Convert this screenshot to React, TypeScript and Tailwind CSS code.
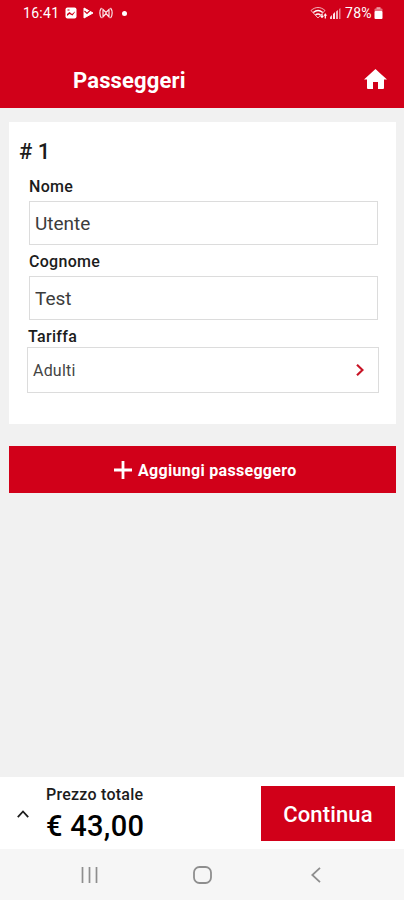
import { useState } from "react";

interface FieldProps {
  label: string;
  value: string;
  onChange: (value: string) => void;
}

// ─── Status Bar ─────────────────────────────────────────────────────────────────

function StatusBar() {
  return (
    <div className="flex h-[26px] items-center pl-[23px] pr-[20px] text-white">
      <span className="w-[37px] whitespace-nowrap text-[14px] leading-none tracking-[0.3px]">16:41</span>
      <svg className="ml-[5px]" width="12" height="12" viewBox="0 0 12 12" fill="none">
        <rect x="0.5" y="0.5" width="11" height="11" rx="2" fill="#fff" />
        <path d="M2 9V7l2.500-2 2.500 2L10 4.500V5L7.500 8.500 4.500 7z" fill="#D10019" />
        <path d="M2.500 3h2" stroke="#D10019" />
      </svg>
      <svg className="ml-[6px]" width="11" height="12" viewBox="0 0 11 12" fill="none">
        <path d="M1 1 10 6 1 11z" fill="#fff" stroke="#fff" strokeLinejoin="round" />
        <path d="m1.500 4 2.500 2.500 3-3" stroke="#D10019" strokeWidth="1.2" />
      </svg>
      <svg className="ml-[5px]" width="14" height="12" viewBox="0 0 14 12" fill="none" stroke="#fff" strokeWidth="1.2" opacity="0.9">
        <path d="M2.500 1C.3 3.500.3 8.500 2.500 11M11.500 1c2.200 2.500 2.200 7.500 0 10" />
        <path d="M4 10V2.500l3 3 3-3V10L7 6.500z" />
      </svg>
      <span className="ml-[9px] h-[5px] w-[5px] rounded-full bg-white" />

      <div className="ml-auto flex items-center">
        <svg width="18" height="14" viewBox="0 0 18 14" fill="none" stroke="#fff" strokeWidth="1.4">
          <path d="M1 4.500c4.500-4 9.500-4 14 0L8 12z" strokeWidth="1" opacity="0.7" />
          <path d="M3.300 6.500c3-2.500 6.500-2.500 9.400 0M5.500 9c1.700-1.400 3.300-1.400 5 0" />
          <path d="m10.500 10 1.500 2 1.500-2zM14 9.500l1.300-2 1.300 2z" fill="#fff" strokeWidth="0.5" />
          <path d="M12 10V8M15.300 9v3.500" strokeWidth="1.200" />
        </svg>
        <svg className="ml-[2px]" width="11" height="11" viewBox="0 0 11 11" fill="#fff">
          <path d="M0 11V9l2-2v4z" opacity="0.8" />
          <path d="M3 11V6l2-2v7z" opacity="0.9" />
          <path d="M6 11V3.500L8 2v9z" opacity="0.7" />
          <path d="M9 11V1l1.500-1v11z" opacity="0.5" />
        </svg>
        <span className="ml-[4px] w-[28px] whitespace-nowrap text-[14px] leading-none tracking-[0.3px]">78%</span>
        <svg className="ml-[1px] mr-[1px]" width="9" height="12" viewBox="0 0 9 12" fill="#fff">
          <rect x="2.500" y="0" width="4" height="2" opacity="0.5" />
          <rect x="0.500" y="1.500" width="8" height="3" rx="1" opacity="0.45" />
          <rect x="0.500" y="4" width="8" height="8" rx="1" />
        </svg>
      </div>
    </div>
  );
}

// ─── Header ─────────────────────────────────────────────────────────────────────

function Header() {
  return (
    <header className="h-[108px] shrink-0 bg-[#D10019]">
      <StatusBar />
      <div className="flex h-[82px] items-center justify-between pl-[73px] pr-[17px] pt-[26px]">
        <h1 className="pt-[2px] text-[22px] font-bold leading-none tracking-[0.15px] text-white">Passeggeri</h1>
        <button className="pb-[2px]" aria-label="Home">
          <svg width="23" height="20" viewBox="0 0 23 20" fill="#fff">
            <path d="M11.500 0 15.500 3.700 23 10.500h-3V19a1 1 0 0 1-1 1h-5v-7H9v7H4a1 1 0 0 1-1-1v-8.500H0z" />
          </svg>
        </button>
      </div>
    </header>
  );
}

function Field({ label, value, onChange }: FieldProps) {
  return (
    <label className="ml-[20px] mr-[18px] block h-[75px]">
      <span className="block h-[27px] pt-[1px] text-[16px] font-medium leading-[24px] tracking-[0.3px] text-[#1c1c1c]">
        {label}
      </span>
      <input
        className="block h-[44px] w-full border border-[#dcdcdc] bg-white px-[5px] pt-[1px] text-[19px] text-[#3c3c3c] outline-none"
        value={value}
        onChange={(e) => onChange(e.target.value)}
      />
    </label>
  );
}

// ─── Passengers Page ────────────────────────────────────────────────────────────

export default function App() {
  const [name, setName] = useState("Utente");
  const [surname, setSurname] = useState("Test");

  return (
    <div className="flex h-screen flex-col overflow-hidden bg-[#f1f1f1] font-['Roboto',sans-serif]">
      <Header />

      <main className="flex-1 pl-[9px] pr-[8px] pt-[14px]">
        <section className="h-[302px] bg-white">
          <h2 className="h-[52px] pl-[10px] pt-[18px] text-[22px] font-medium leading-[24px] text-[#1c1c1c]">
            # 1
          </h2>
          <Field label="Nome" value={name} onChange={setName} />
          <Field label="Cognome" value={surname} onChange={setSurname} />
          <div className="ml-[18px] mr-[17px]">
            <div className="h-[23px] pl-[1px] pt-[1px] text-[16px] font-medium leading-[24px] tracking-[0.3px] text-[#1c1c1c]">
              Tariffa
            </div>
            <button className="flex h-[46px] w-full items-center justify-between border border-[#dcdcdc] pl-[5px] pr-[14px]">
              <span className="pt-[2px] text-[16px] tracking-[0.2px] text-[#444]">Adulti</span>
              <svg width="8" height="12" viewBox="0 0 8 12" fill="none" stroke="#C81426" strokeWidth="2.200">
                <path d="m1 .8 5.500 5.200L1 11.200" />
              </svg>
            </button>
          </div>
        </section>

        <button className="mt-[22px] flex h-[47px] w-full items-center gap-[6px] bg-[#D10019] pl-[105px] pt-[1px] text-white">
          <svg width="18" height="18" viewBox="0 0 18 18" stroke="#fff" strokeWidth="2.800">
            <path d="M9 0v18M0 9h18" />
          </svg>
          <span className="pt-[2px] text-[16px] font-bold leading-none tracking-[0.3px]">Aggiungi passeggero</span>
        </button>
      </main>

      {/* Total price */}
      <footer className="flex h-[72px] shrink-0 items-center bg-white pl-[17px] pr-[9px]">
        <svg className="mt-[2px]" width="12" height="8" viewBox="0 0 12 8" fill="none" stroke="#1c1c1c" strokeWidth="1.800">
          <path d="m.8 7.200 5.200-5.700 5.200 5.700" />
        </svg>
        <div className="ml-[17px] h-full whitespace-nowrap text-black">
          <div className="pt-[6px] text-[16px] font-medium leading-[24px] tracking-[0.25px] text-[#1c1c1c]">Prezzo totale</div>
          <div className="pt-[3px] text-[29px] font-medium leading-[32px] tracking-[0.3px]">€ 43,00</div>
        </div>
        <button className="ml-auto h-[55px] w-[134px] bg-[#D10019] pt-[3px] text-[22px] font-medium tracking-[0.15px] text-white">
          Continua
        </button>
      </footer>

      {/* Android navigation */}
      <nav className="flex h-[51px] shrink-0 items-center bg-[#f6f6f6] pl-[81px]">
        <svg width="17" height="16" viewBox="0 0 17 16" stroke="#8e8e8e" strokeWidth="1.700">
          <path d="M1.500 0v16M8.500 0v16M15.500 0v16" />
        </svg>
        <svg className="ml-[95px]" width="19" height="18" viewBox="0 0 19 18" fill="none" stroke="#8e8e8e" strokeWidth="1.800">
          <rect x="1" y="1" width="17" height="16" rx="5.500" />
        </svg>
        <svg className="ml-[99px]" width="10" height="16" viewBox="0 0 10 16" fill="none" stroke="#8e8e8e" strokeWidth="1.800">
          <path d="M9 .8 1.300 8 9 15.200" />
        </svg>
      </nav>
    </div>
  );
}
